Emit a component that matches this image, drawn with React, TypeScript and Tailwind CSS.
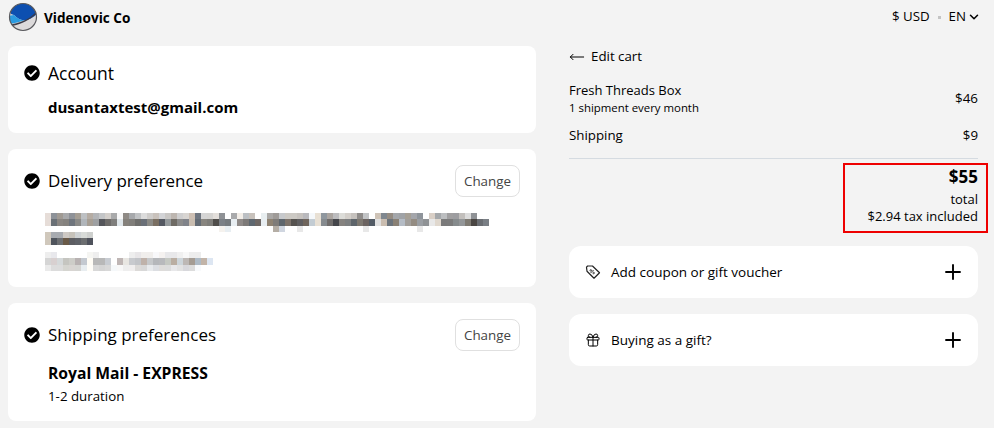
import { ChevronDown, Gift, MoveLeft, Plus } from "lucide-react";
import { FaCheckCircle } from "react-icons/fa";

const F = "[font-family:'Open_Sans','Noto_Sans',sans-serif]";

const mosaic: { y: number; h: number; c: string }[] = [
  { y: 0, h: 6, c: "e6ddd8 8d9298 a09a93 a8a9ab 8f9298 a59e94 bdc0c3 b5aca3 b3b5b8 c3c5c7 d3cfcb a9aaab f8f8f8 8f8a85 a7a9ac c1c3c5 dcdcdc cfcdcb c9c2bc d2d3d6 c9c7c5 bdb6b0 cfcfd0 d8d5d2 cdbfb3 6f7680 d5d5d5 d5d4d2 e3dfdb 8f9296 ffffff a9aaac f3eee8 bcc0c4 c8c2bc ffffff e8eef0 aaa8a6 9f9b98 c7c9cc ccc9c4 ccc9c4 c6c2be b9b9bd f5f8fb e8e0d4 8f979e aba5a0 bcbcbe dcdcd8 d3cfca c5c1bd 8f8c8a c2c4c6 ffffff cfc4b8 7f878f 958c82 a4a7ab a0a3a7 a6a096 a4a6ab 8f959b ffffff d9cfc6 a5a8ab bcbec0 a09fa0 9d9da0 c2bfbc dcdcdc 8f9296" },
  { y: 6, h: 7, c: "e6ddd8 6a7076 8a8682 85827e 6f757d 8a8a88 b0b5ba a69e94 9ea0a2 55565b 6e6c6a 7f7e7c dfe6ea 85817b 807e7a 6e6e6c 6a7078 8b8a85 7a6f62 555962 959a9c 6f6b65 8b8b8b 80838a c9bdb0 646c75 88857f 7f7e7a 4f4d4a 7b8086 757a7e e8eef2 8f8a88 7d7a78 5f6870 6f6865 e8eef2 8f8373 7f7c79 5e666d 7c726a 55524f 5f5e60 6f655c c3ccd3 e8e0d4 868b8f 706d6c 45464b 85827f 7d7f80 5e656b 7d7870 6b6360 525b65 e0e0e0 cabdb0 6c747c 8a8175 b5bcc5 a29f9b 948c82 9a9ea3 8f9295 e8e8e8 e0d8ce 7a7a7a 7b7b7b 868b8d 939698 7e7a72 4a4643 6a6d72 7a7f85" },
  { y: 13, h: 6, c: "ffffff ".repeat(29) + "f5f2ee e8eef2 " + "ffffff ".repeat(7) + "b5aea5 d0d6e0 ffffff ffffff e8e8e8 " + "ffffff ".repeat(10) + "e8e8e8 " + "ffffff ".repeat(8) + "e8e8e8" },
  { y: 19, h: 6, c: "d0c8bc a8abb0 a8abb0 cec9c4 c6c2ba ced2d4 d8dbd8 ced0ce" },
  { y: 25, h: 7, c: "d0c8bc 4f545c 6d6f72 6a5a48 5c5d62 5f6268 6c6e70 4f525c" },
  { y: 39, h: 6, c: "eeeeee e8e8ec ffffff ffffff ffffff ffffff ffffff f5f5f2 eeeeee ffffff ffffff ffffff ffffff ffffff eeeeee e8e6e8 f0eeec f0eeec f8f8fa f5f2f0 e8e8ea e8e8ea f0f0f0 f8f8f8 ededed ededed" },
  { y: 45, h: 7, c: "d5d5d5 d8d0d0 d5d9da c5c5c0 cdcdc8 b8b2b2 c4c9d0 fffcf5 b8b8b8 b8b8b8 c8ccd2 ffffff bfb6b5 e8e6e2 c8cace c2c4c8 bfb2aa c6c8ca b5b7ba b8b9bc c5c8c2 baaea2 cdd5da bdb8b5 a59c93 aebac5 c2b4a8 dde6f2" },
  { y: 52, h: 6, c: "eaeaea dcdcdc dcdcdc d5d5d0 d8d5d2 d5d5d2 e8edf0 fffdf8 d8d8d8 d4d4d4 d8d8d8 f5f8fa f8f8f8 eeeeee f0eeee dcdad8 d8d8d8 e8eaec dcdee2 dedcda dcdcdc e8e8ea e2e2e2 d8d8dc dcdcdc f8fafc" },
];

function Mosaic() {
  return (
    <svg width="450" height="58" shapeRendering="crispEdges" className="block">
      {mosaic.flatMap((row) =>
        row.c.trim().split(/\s+/).map((col, i) => (
          <rect key={`${row.y}-${i}`} x={i * 6} y={row.y} width="6" height={row.h} fill={`#${col}`} />
        ))
      )}
    </svg>
  );
}

function Logo() {
  return (
    <svg width="30" height="30" viewBox="0 0 30 30" className="shrink-0">
      <defs>
        <clipPath id="lc"><circle cx="15" cy="15" r="13.5" /></clipPath>
      </defs>
      <g clipPath="url(#lc)">
        <rect width="30" height="30" fill="#dcdadb" />
        <path d="M3 0H30V11C26 15 21 18 16 18.5C12 18 9 16 6 13L3 12Z" fill="#0d4fb0" />
        <path d="M0 14 L6 13 C9 16 12 18 16 18.5 C11 20 7 21 2 22Z" fill="#2b9be0" />
        <path d="M2 22.5C10 21 20 19 28 10L29 11C22 18 13 22.5 4 24Z" fill="#3a3a48" />
      </g>
      <circle cx="15" cy="15" r="13.5" fill="none" stroke="#5a5a5e" strokeWidth="1.2" />
    </svg>
  );
}

function TagIcon() {
  return (
    <svg width="16" height="16" viewBox="0 0 16 16" fill="none" stroke="#222" strokeWidth="1.2" strokeLinejoin="round">
      <path d="M1.5 3.2 L2.6 2 L7.5 2 L14.5 8.8 L9 14.2 L2 7.3 Z" />
      <path d="M5.6 9 L8.6 6" strokeWidth="0.9" />
      <circle cx="5.8" cy="6.4" r="0.8" strokeWidth="0.8" />
      <circle cx="8.6" cy="9" r="0.8" strokeWidth="0.8" />
    </svg>
  );
}

function Change() {
  return (
    <button className="h-[32px] w-[65px] rounded-lg border border-[#e0e0e0] bg-white text-[13.4px] text-[#444]">
      Change
    </button>
  );
}

function Heading({ title, size }: { title: string; size: string }) {
  return (
    <div className="flex items-center gap-2">
      <FaCheckCircle className="h-4 w-4 text-black" />
      <h2 className={`${size} leading-[24px] text-black`}>{title}</h2>
    </div>
  );
}

function Addon({ icon, label }: { icon: React.ReactNode; label: string }) {
  return (
    <div className="flex h-[52px] items-center rounded-xl bg-white pl-4 pr-[13px]">
      <span className="flex w-[26px] shrink-0">{icon}</span>
      <span className="flex-1 text-[13.5px] text-black">{label}</span>
      <Plus className="h-6 w-6 text-black" strokeWidth={1.9} />
    </div>
  );
}

export default function App() {
  return (
    <div className={`${F} h-[428px] w-[994px] overflow-hidden bg-[#f3f3f3] text-black`}>
      <header className="flex h-[34px] items-center justify-between pl-2 pr-4">
        <div className="flex items-center gap-[6px]">
          <Logo />
          <span className="pt-[2px] text-[13.6px] font-bold">Videnovic Co</span>
        </div>
        <div className="flex items-center text-[13.3px]">
          <span>$ USD</span>
          <span className="mx-[8px] h-[3px] w-[3px] bg-[#c4c4c4]" />
          <span>EN</span>
          <ChevronDown className="ml-[1px] h-[14px] w-[14px] -mr-[3px]" strokeWidth={2.6} />
        </div>
      </header>

      <div className="mt-[12px] flex items-start justify-between pl-2 pr-4">
        <div className="flex w-[528px] flex-col gap-4">
          <section className="h-[87px] rounded-lg bg-white px-4 pt-[15px]">
            <Heading title="Account" size="text-[17.5px]" />
            <p className="mt-[12px] pl-6 text-[15px] leading-[20px] font-bold">dusantaxtest@gmail.com</p>
          </section>
          <section className="h-[138px] rounded-lg bg-white px-4 pt-4">
            <div className="flex items-start justify-between">
              <div className="pt-[4px]"><Heading title="Delivery preference" size="text-[17px]" /></div>
              <Change />
            </div>
            <div className="mt-[16px] pl-[21px]"><Mosaic /></div>
          </section>
          <section className="h-[118px] rounded-lg bg-white px-4 pt-4">
            <div className="flex items-start justify-between">
              <div className="pt-[4px]"><Heading title="Shipping preferences" size="text-[17px]" /></div>
              <Change />
            </div>
            <p className="mt-[12px] pl-6 text-[15.7px] leading-[20px] font-bold">Royal Mail - EXPRESS</p>
            <p className="mt-[4px] pl-6 text-[13.3px] leading-[18px]">1-2 duration</p>
          </section>
        </div>

        <aside className="w-[409px]">
          <div className="flex h-[20px] items-center gap-[6px] pt-[1px] text-[13.3px]">
            <MoveLeft className="h-4 w-4" strokeWidth={1.5} />
            <span>Edit cart</span>
          </div>
          <div className="mt-[15px] flex items-center justify-between">
            <div>
              <p className="text-[13px] leading-[18px]">Fresh Threads Box</p>
              <p className="text-[11.4px] leading-[17px]">1 shipment every month</p>
            </div>
            <span className="text-[13.4px]">$46</span>
          </div>
          <div className="mt-[9px] flex items-center justify-between text-[13.3px] leading-[20px]">
            <span>Shipping</span>
            <span>$9</span>
          </div>
          <div className="mt-[13px] h-px bg-[#d5dbe1]" />
          <div className="-mr-[10px] mt-[4px] ml-auto h-[70px] w-[145px] border-2 border-[#ee0000] pr-[8px] text-right">
            <p className="text-[17px] leading-[24px] font-bold">$55</p>
            <p className="mt-[2px] text-[13px] leading-[17px]">total</p>
            <p className="text-[13px] leading-[17px]">$2.94 tax included</p>
          </div>
          <div className="mt-[13px] flex flex-col gap-4">
            <Addon icon={<TagIcon />} label="Add coupon or gift voucher" />
            <Addon icon={<Gift className="h-4 w-4" strokeWidth={1.5} />} label="Buying as a gift?" />
          </div>
        </aside>
      </div>
    </div>
  );
}
